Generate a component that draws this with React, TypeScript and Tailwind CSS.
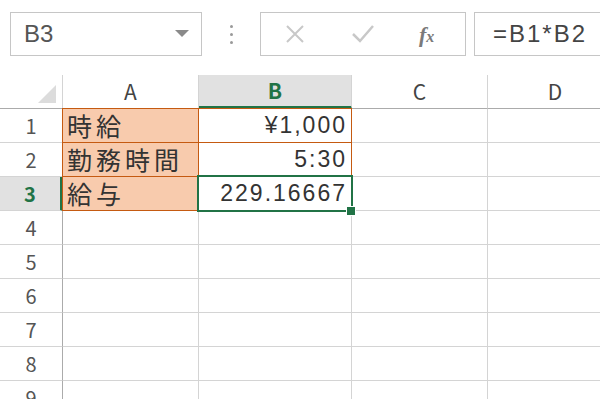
import React from 'react';

const ORANGE = 'border-[#c55a11]';
const JP = 'flex h-[34px] items-center border-r border-b bg-[#f8cbad] pl-[4px] text-[25px] tracking-[4px] text-[#333]';
const NUM = "flex h-[34px] items-center justify-end border-r border-b pr-[4px] font-['Liberation_Sans',sans-serif] text-[23px] tracking-[2px] text-[#333]";

function HeaderCell({ label, active }: { label: string; active?: boolean }) {
  return (
    <div
      className={
        'flex h-[34px] items-center justify-center border-r border-b border-r-[#d4d4d4] text-[21px] ' +
        (active
          ? 'border-b-[3px] border-b-[#217346] bg-[#e1e1e1] font-bold text-[#217346]'
          : 'border-b-[#ababab] bg-white text-[#444]')
      }
    >
      {label}
    </div>
  );
}

function RowHead({ n, active }: { n: number; active?: boolean }) {
  return (
    <div
      className={
        'flex h-[34px] items-center justify-center border-b border-b-[#d4d4d4] text-[20px] ' +
        (active
          ? 'border-r-[3px] border-r-[#217346] bg-[#e1e1e1] font-bold text-[#217346]'
          : 'border-r border-r-[#ababab] bg-white text-[#555]')
      }
    >
      {n}
    </div>
  );
}

export default function App() {
  const rows = [4, 5, 6, 7, 8, 9];
  return (
    <div className="h-[399px] w-[600px] overflow-hidden bg-white font-['Noto_Sans_CJK_JP',sans-serif]">
      {/* formula bar */}
      <div className="flex h-[75px] items-start pt-[12px]">
        <div className="ml-[10px] flex h-[44px] w-[192px] items-center justify-between border border-[#c6c6c6] pl-[13px] pr-[12px]">
          <span className="font-['Liberation_Sans',sans-serif] text-[24px] text-[#555]">B3</span>
          <svg width="14" height="8" viewBox="0 0 14 8">
            <path d="M0 0 L14 0 L7 7 Z" fill="#8a8a8a" />
          </svg>
        </div>
        <div className="flex h-[44px] w-[58px] flex-col items-center justify-center gap-[5px]">
          <span className="h-[3px] w-[3px] rounded-full bg-[#9a9a9a]" />
          <span className="h-[3px] w-[3px] rounded-full bg-[#9a9a9a]" />
          <span className="h-[3px] w-[3px] rounded-full bg-[#9a9a9a]" />
        </div>
        <div className="flex h-[44px] w-[206px] items-center border border-[#c6c6c6]">
          <svg width="20" height="20" viewBox="0 0 20 20" className="ml-[24px]">
            <path d="M2 2 L18 18 M18 2 L2 18" stroke="#c8c8c8" strokeWidth="2" />
          </svg>
          <svg width="24" height="20" viewBox="0 0 24 20" className="ml-[46px]">
            <path d="M2 10 L9 17 L22 2" stroke="#c8c8c8" strokeWidth="2.5" fill="none" />
          </svg>
          <span className="ml-[44px] font-['Liberation_Serif',serif] text-[22px] font-bold italic text-[#7a7a7a]">
            f<span className="text-[16px]">x</span>
          </span>
        </div>
        <div className="ml-[8px] flex h-[44px] flex-1 items-center border border-r-0 border-[#c6c6c6] pl-[18px]">
          <span className="font-['Liberation_Sans',sans-serif] text-[24px] tracking-[2px] text-[#444]">=B1*B2</span>
        </div>
      </div>

      {/* grid */}
      <div className="relative grid w-[623px] grid-cols-[63px_136px_153px_136px_135px]">
        <div className="relative h-[34px] border-r border-b border-r-[#d4d4d4] border-b-[#ababab] bg-white">
          <svg width="18" height="18" viewBox="0 0 18 18" className="absolute top-[10px] left-[38px]">
            <path d="M18 0 L18 18 L0 18 Z" fill="#dcdcdc" />
          </svg>
        </div>
        <HeaderCell label="A" />
        <HeaderCell label="B" active />
        <HeaderCell label="C" />
        <HeaderCell label="D" />

        <RowHead n={1} />
        <div className={`${JP} ${ORANGE}`}>時給</div>
        <div className={`${NUM} ${ORANGE}`}>¥1,000</div>
        <div className="h-[34px] border-r border-b border-[#d4d4d4]" />
        <div className="h-[34px] border-b border-[#d4d4d4]" />

        <RowHead n={2} />
        <div className={`${JP} ${ORANGE}`}>勤務時間</div>
        <div className={`${NUM} ${ORANGE}`}>5:30</div>
        <div className="h-[34px] border-r border-b border-[#d4d4d4]" />
        <div className="h-[34px] border-b border-[#d4d4d4]" />

        <RowHead n={3} active />
        <div className={`${JP} ${ORANGE}`}>給与</div>
        <div className={`${NUM} ${ORANGE}`}>229.16667</div>
        <div className="h-[34px] border-r border-b border-[#d4d4d4]" />
        <div className="h-[34px] border-b border-[#d4d4d4]" />

        {rows.map((n) => (
          <React.Fragment key={n}>
            <RowHead n={n} />
            <div className="h-[34px] border-r border-b border-[#d4d4d4]" />
            <div className="h-[34px] border-r border-b border-[#d4d4d4]" />
            <div className="h-[34px] border-r border-b border-[#d4d4d4]" />
            <div className="h-[34px] border-b border-[#d4d4d4]" />
          </React.Fragment>
        ))}

        {/* orange range outline */}
        <div className="pointer-events-none absolute top-[33px] left-[62px] h-[103px] w-[290px] border border-[#c55a11]" />
        {/* active cell */}
        <div className="pointer-events-none absolute top-[100px] left-[197px] h-[37px] w-[156px] border-2 border-[#217346]" />
        <div className="pointer-events-none absolute top-[131px] left-[346px] h-[10px] w-[10px] border border-white bg-[#217346]" />
      </div>
    </div>
  );
}
